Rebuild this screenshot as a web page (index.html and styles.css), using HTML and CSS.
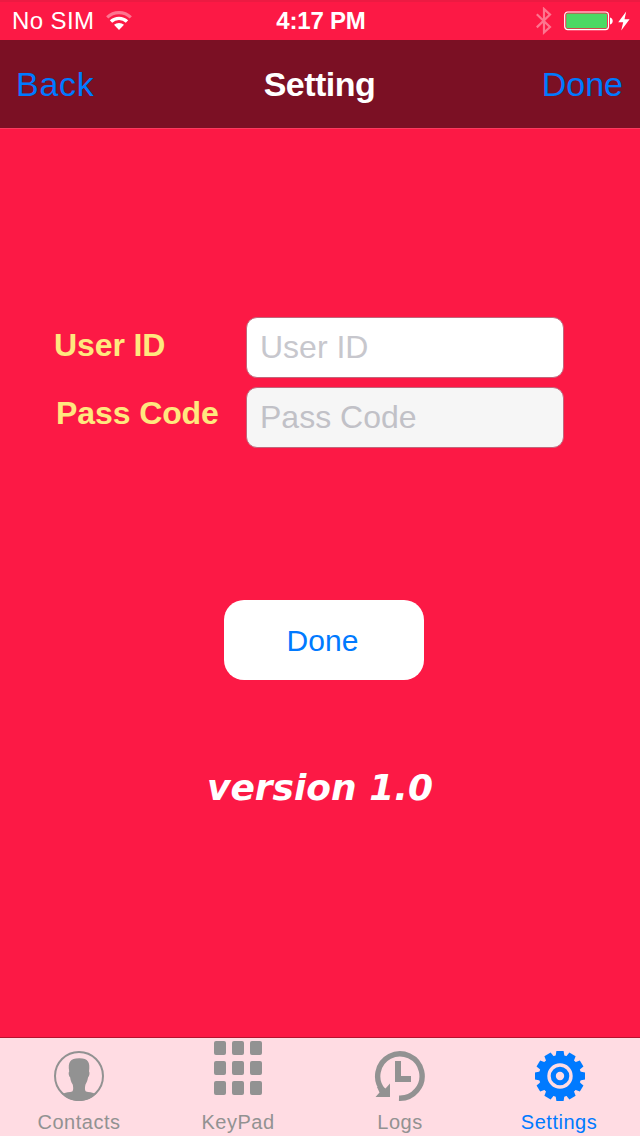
FILE: index.html
```html
<!DOCTYPE html>
<html lang="en">
<head>
    <meta charset="UTF-8">
    <meta name="viewport" content="width=device-width, initial-scale=1.0">
    <title>Setting</title>
    <link rel="stylesheet" href="styles.css">
</head>
<body>
<div id="app">
    <div class="status-bar">
        <div class="status-left">
            <span class="carrier">No SIM</span>
            <svg width="26" height="20" viewBox="0 0 26 20">
                <path d="M1.2 6.4 A17 17 0 0 1 24.8 6.4" fill="none" stroke="#fff" stroke-opacity=".4" stroke-width="3.2"/>
                <path d="M5 10.6 A11.6 11.6 0 0 1 21 10.6" fill="none" stroke="#fff" stroke-width="3.4"/>
                <path d="M8 13.8 A7.6 7.6 0 0 1 18 13.8 L13 19 Z" fill="#fff"/>
            </svg>
        </div>
        <div class="clock">4:17 PM</div>
        <div class="status-right">
            <svg width="16" height="28" viewBox="0 0 16 28">
                <path d="M.8 7.2 L14 20 L8 25.5 V2 L14 7.6 L.8 20.4" fill="none" stroke="#fff" stroke-opacity=".4" stroke-width="2.2"/>
            </svg>
            <svg class="battery" width="50" height="20" viewBox="0 0 50 20">
                <rect x=".7" y="1" width="43.8" height="17.6" rx="3" fill="none" stroke="#fff" stroke-width="1.2"/>
                <rect x="2.2" y="2.4" width="40.8" height="14.8" rx="1.2" fill="#4cd964"/>
                <path d="M46 6.4 C49.6 7 49.6 12.8 46 13.4 Z" fill="#fff"/>
            </svg>
            <svg width="12" height="20" viewBox="0 0 12 20">
                <path d="M8.2 .5 L.2 11.2 H5.2 L3.2 19.5 L11.6 8.2 H6.5 Z" fill="#fff"/>
            </svg>
        </div>
    </div>

    <div class="nav-bar">
        <a class="nav-btn back">Back</a>
        <h1>Setting</h1>
        <a class="nav-btn done">Done</a>
    </div>

    <div class="content">
        <div class="form">
            <label class="user-label" for="user">User ID</label>
            <input id="user" type="text" placeholder="User ID">
            <label class="pass-label" for="pass">Pass Code</label>
            <input id="pass" type="password" placeholder="Pass Code">
        </div>
        <button id="submit">Done</button>
        <div class="version">version 1.0</div>
    </div>

    <div class="tab-bar">
        <div class="tab contacts">
            <svg width="52" height="54" viewBox="0 0 52 54">
                <circle cx="26" cy="27" r="24" fill="none" stroke="#929292" stroke-width="2"/>
                <path d="M9 45 C12.6 43 17 43.2 19.2 42.4 C20.6 41.4 20.4 38 19.6 35.2 C18.2 33.4 17.4 30.6 17.2 28.4 C15.8 27.6 15.2 23.4 16.2 22.6 C14.8 13 17 9.4 26 9.2 C35 9 37.4 13 36 22.6 C37 23.4 36.4 27.6 35 28.4 C34.6 31 33.8 33.4 32.6 35.2 C31.8 38 31.6 41.4 33 42.4 C35.4 43.2 39.4 43 43 45 C38.4 49.6 32.6 52 26 52 C19.4 52 13.6 49.6 9 45 Z" fill="#929292"/>
            </svg>
            <span>Contacts</span>
        </div>
        <div class="tab keypad">
            <div class="keys">
                <i></i><i></i><i></i>
                <i></i><i></i><i></i>
                <i></i><i></i><i></i>
            </div>
            <span>KeyPad</span>
        </div>
        <div class="tab logs">
            <svg width="54" height="54" viewBox="0 0 54 54">
                <path d="M10.5 42 A22.2 22.2 0 1 1 26 49.2" fill="none" stroke="#929292" stroke-width="5.4"/>
                <path d="M2.5 48 L6.5 43.5 L4 38 L9 37.5 L12.5 39.5 L17 34.5 V48 Z" fill="#929292"/>
                <path d="M25 12 V30 H38" fill="none" stroke="#929292" stroke-width="6"/>
            </svg>
            <span>Logs</span>
        </div>
        <div class="tab settings active">
            <svg width="54" height="54" viewBox="-27 -27 54 54">
                <g fill="#007aff">
                    <path id="teeth" d="M-4.4 -20 L-3.6 -25 H3.6 L4.4 -20 V20 L3.6 25 H-3.6 L-4.4 20 Z"/>
                    <use href="#teeth" transform="rotate(30)"/>
                    <use href="#teeth" transform="rotate(60)"/>
                    <use href="#teeth" transform="rotate(90)"/>
                    <use href="#teeth" transform="rotate(120)"/>
                    <use href="#teeth" transform="rotate(150)"/>
                    <circle r="21"/>
                </g>
                <circle r="11" fill="none" stroke="#ffdce3" stroke-width="3.4"/>
                <circle r="4.2" fill="#ffdce3"/>
            </svg>
            <span>Settings</span>
        </div>
    </div>
</div>
</body>
</html>
```
FILE: styles.css
```css
* {
    box-sizing: border-box;
}

body {
    margin: 0;
    font-family: 'Liberation Sans', Arial, sans-serif;
    background-color: #fc1945;
}

#app {
    display: flex;
    flex-direction: column;
    width: 640px;
    height: 1136px;
    overflow: hidden;
}

.status-bar {
    display: grid;
    grid-template-columns: 1fr auto 1fr;
    align-items: center;
    height: 40px;
    padding: 0 10px 0 12px;
    border-top: 2px solid #ec1a42;
    color: #fff;
    font-size: 24px;
}

.status-left {
    display: flex;
    align-items: center;
    gap: 12px;
}

.carrier {
    letter-spacing: 0.4px;
}

.clock {
    font-weight: bold;
    letter-spacing: -0.2px;
}

.status-right {
    display: flex;
    align-items: center;
    justify-content: flex-end;
}

.battery {
    margin: 0 4px 0 12px;
}

.nav-bar {
    display: grid;
    grid-template-columns: 1fr auto 1fr;
    align-items: center;
    height: 89px;
    padding: 0 17px 0 16px;
    background-color: #7b1024;
    border-bottom: 1px solid #fe3a5f;
}

.nav-bar h1 {
    margin: 0;
    color: #fff;
    font-size: 34px;
    letter-spacing: -0.5px;
}

.nav-btn {
    color: #007aff;
    font-size: 34px;
}

.back {
    letter-spacing: 0.7px;
}

.done {
    text-align: right;
}

.content {
    flex: 1;
    display: flex;
    flex-direction: column;
    padding-top: 188px;
}

.form {
    display: grid;
    grid-template-columns: 192px 317px;
    row-gap: 9px;
    margin-left: 54px;
}

.form label {
    color: #ffe87f;
    font-size: 32px;
    font-weight: bold;
    line-height: 57px;
    letter-spacing: -0.1px;
}

.form .pass-label {
    padding-left: 2px;
    line-height: 52px;
}

.form input {
    width: 318px;
    height: 61px;
    padding: 0 13px;
    border: 1px solid #c0687c;
    border-radius: 11px;
    background-color: #fff;
    font-family: inherit;
    font-size: 32px;
    outline: none;
}

.form input::placeholder {
    color: #c7c7cd;
    opacity: 1;
}

#pass {
    background-color: #f6f6f6;
}

#pass::placeholder {
    color: #c1c1c7;
}

#submit {
    width: 200px;
    height: 80px;
    margin: 152px 0 0 224px;
    padding: 2px 3px 0 0;
    border: none;
    border-radius: 20px;
    background-color: #fff;
    color: #007aff;
    font-family: inherit;
    font-size: 30px;
    letter-spacing: 0.1px;
}

.version {
    margin-top: 87px;
    color: #fff;
    font-family: 'DejaVu Sans', Verdana, sans-serif;
    font-size: 36px;
    font-weight: bold;
    font-style: italic;
    text-align: center;
}

.tab-bar {
    display: grid;
    grid-template-columns: repeat(4, 160px);
    height: 99px;
    border-top: 1px solid #b5132f;
    background-color: #ffdce3;
}

.tab {
    display: flex;
    flex-direction: column;
    align-items: center;
    justify-content: space-between;
    padding: 11px 2px 2px 0;
    color: #929292;
    font-size: 20px;
    letter-spacing: 0.5px;
}

.keypad {
    padding-top: 3px;
    padding-right: 4px;
}

.logs {
    padding-right: 0;
}

.settings {
    padding-right: 0;
}

.settings span {
    margin-right: 2px;
}

.active {
    color: #007aff;
}

.keys {
    display: grid;
    grid-template-columns: repeat(3, 12px);
    gap: 6px;
}

.keys i {
    height: 14px;
    border-radius: 2px;
    background-color: #929292;
}
```
